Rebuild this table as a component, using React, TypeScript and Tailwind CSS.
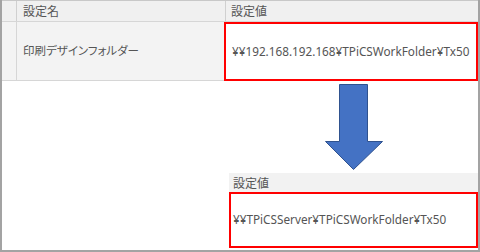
import React from 'react';

// Settings grid: before / after view of the print design folder path
const jp = "font-['Noto_Sans_CJK_JP',sans-serif]";
const path = "font-['Noto_Sans','Noto_Sans_CJK_JP',sans-serif] whitespace-nowrap";

const DownArrow: React.FC = () => (
  <svg width="58" height="87" viewBox="0 0 58 87" className="block">
    <path
      d="M14.5 0.5 H42.5 V57.5 H57.5 L28.5 85.5 L0.5 57.5 H14.5 Z"
      fill="#4472c4"
      stroke="#2f528f"
      strokeWidth="1"
    />
  </svg>
);

const App: React.FC = () => {
  return (
    <div className="w-[480px] h-[252px] bg-white border-x-2 border-b-2 border-[#a3a3a3] flex flex-col text-[#555555] overflow-hidden">
      {/* header */}
      <div className={`flex h-[22px] bg-[#f0f0f0] border-t border-[#c8c8c8] border-b border-b-[#d6d6d6] text-[12px] ${jp}`}>
        <div className="w-[15px] border-r border-[#d0d0d0]" />
        <div className="w-[209px] pl-[6px] flex items-center border-r border-[#d0d0d0]">設定名</div>
        <div className="flex-1 pl-[5px] flex items-center">設定値</div>
      </div>

      {/* current value */}
      <div className="flex h-[59px]">
        <div className="w-[15px] bg-[#f3f3f3] border-r border-b border-[#d6d6d6]" />
        <div className={`w-[207px] bg-[#f3f3f3] border-b border-[#d6d6d6] pl-[6px] flex items-center text-[11.5px] [font-feature-settings:'palt'] ${jp}`}>
          印刷デザインフォルダー
        </div>
        <div className={`flex-1 border-2 border-[#ff0000] flex items-center pl-[6px] text-[11.75px] ${path}`}>
          ¥¥192.168.192.168¥TPiCSWorkFolder¥Tx50
        </div>
      </div>

      <div className="h-[92px] pl-[323px] pt-[3px]">
        <DownArrow />
      </div>

      {/* new value */}
      <div className="ml-[227px] flex flex-col">
        <div className={`h-[19px] bg-[#f2f2f2] pl-[4px] flex items-center text-[12px] ${jp}`}>設定値</div>
        <div className={`h-[56px] border-2 border-[#ff0000] flex items-center pl-[2px] text-[11.75px] ${path}`}>
          ¥¥TPiCSServer¥TPiCSWorkFolder¥Tx50
        </div>
      </div>
    </div>
  );
};

export default App;
